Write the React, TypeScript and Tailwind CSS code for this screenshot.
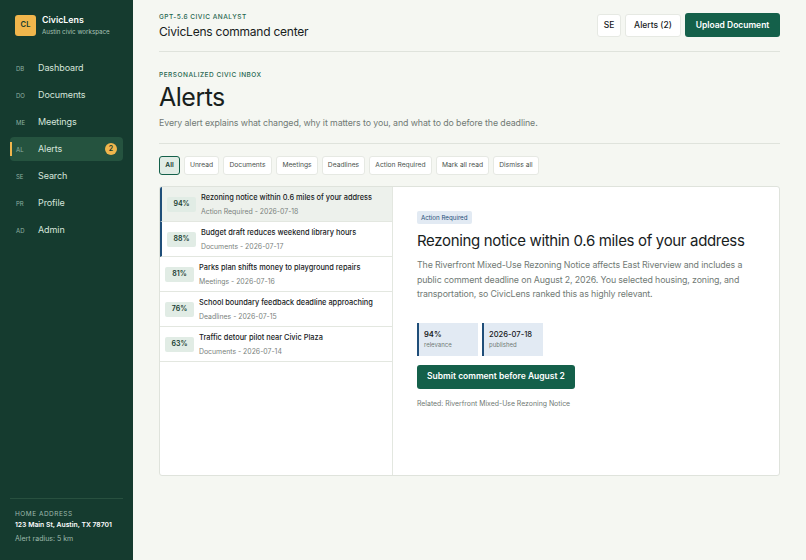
const navItems = [
  { code: "DB", label: "Dashboard" },
  { code: "DO", label: "Documents" },
  { code: "ME", label: "Meetings" },
  { code: "AL", label: "Alerts", active: true, badge: "2" },
  { code: "SE", label: "Search" },
  { code: "PR", label: "Profile" },
  { code: "AD", label: "Admin" },
];

const filters = [
  { label: "All", width: "w-[21px]" },
  { label: "Unread", width: "w-[35px]" },
  { label: "Documents", width: "w-[49px]" },
  { label: "Meetings", width: "w-[42px]" },
  { label: "Deadlines", width: "w-[43px]" },
  { label: "Action Required", width: "w-[63px]" },
  { label: "Mark all read", width: "w-[53px]" },
  { label: "Dismiss all", width: "w-[46px]" },
];

const alerts = [
  { score: "94%", title: "Rezoning notice within 0.6 miles of your address", meta: "Action Required - 2026-07-18", selected: true, unread: true },
  { score: "88%", title: "Budget draft reduces weekend library hours", meta: "Documents - 2026-07-17", unread: true },
  { score: "81%", title: "Parks plan shifts money to playground repairs", meta: "Meetings - 2026-07-16" },
  { score: "76%", title: "School boundary feedback deadline approaching", meta: "Deadlines - 2026-07-15" },
  { score: "63%", title: "Traffic detour pilot near Civic Plaza", meta: "Documents - 2026-07-14" },
];

const Sidebar = () => (
  <aside className="w-[133px] shrink-0 bg-[#153b2f] flex flex-col px-[10px] pt-[14px] pb-[15px]">
    <div className="flex items-center gap-[6px] px-[5px] h-[22px]">
      <div className="w-[21px] h-[21px] shrink-0 rounded-[3px] bg-[#f0b64c] text-[#153b2f] text-[7.5px] font-semibold flex items-center justify-center">
        CL
      </div>
      <div className="flex flex-col">
        <span className="text-white text-[8.8px] leading-[13px] font-semibold">CivicLens</span>
        <span className="text-[#a9c4b7] text-[6.2px] leading-[11px] whitespace-nowrap">Austin civic workspace</span>
      </div>
    </div>
    <nav className="mt-[20px] flex flex-col gap-[3px]">
      {navItems.map((item) => (
        <div
          key={item.code}
          className={`relative h-[24px] flex items-center rounded-[4px] pl-[6px] pr-[6px] ${item.active ? "bg-[#25533f]" : ""}`}
        >
          {item.active && <span className="absolute left-0 top-[5px] bottom-[5px] w-[2px] bg-[#f0b64c]" />}
          <span className="w-[22px] text-[6px] text-[#8fb0a1]">{item.code}</span>
          <span className="text-[9px] tracking-[-0.1px] text-[#d6e5dc]">{item.label}</span>
          {item.badge && (
            <span className="ml-auto w-[12px] h-[12px] rounded-full bg-[#f0b64c] text-[#153b2f] text-[7px] font-semibold flex items-center justify-center">
              {item.badge}
            </span>
          )}
        </div>
      ))}
    </nav>
    <div className="mt-auto border-t border-[#28503f] pt-[10px] px-[5px]">
      <div className="text-[6.5px] leading-[10px] tracking-[0.5px] text-[#9dbaac]">HOME ADDRESS</div>
      <div className="text-[6.8px] leading-[12px] font-semibold text-white whitespace-nowrap">123 Main St, Austin, TX 78701</div>
      <div className="text-[7px] leading-[12px] mt-[2px] text-[#9dbaac]">Alert radius: 5 km</div>
    </div>
  </aside>
);

const Header = () => (
  <header className="h-[52px] shrink-0 border-b border-[#dfe3dc] flex items-center justify-between">
    <div className="mt-[1px]">
      <div className="text-[6.5px] leading-[10px] tracking-[0.5px] font-medium text-[#1f6650]">GPT-5.6 CIVIC ANALYST</div>
      <div className="text-[12px] leading-[17px] tracking-[-0.22px] mt-[1px] text-[#18211d]">CivicLens command center</div>
    </div>
    <div className="flex items-center gap-[4px] -mt-[1px]">
      <button className="h-[23px] w-[24px] bg-white rounded-[3px] border border-[#e6e9e3] text-[8.5px] font-medium text-[#18211d]">SE</button>
      <button className="h-[23px] w-[56px] bg-white rounded-[3px] border border-[#e6e9e3] text-[8.5px] font-medium text-[#18211d]">Alerts (2)</button>
      <button className="h-[24px] w-[95px] bg-[#14604a] rounded-[3px] text-[8.5px] font-semibold text-white">Upload Document</button>
    </div>
  </header>
);

const AlertRow = ({ score, title, meta, selected, unread }: (typeof alerts)[number]) => (
  <div
    className={`h-[35px] shrink-0 flex items-center border-b border-[#e3e7e0] pl-[5px] ${selected ? "bg-[#edf1ec]" : ""} ${unread ? "border-l-2 border-l-[#1f4e79]" : ""}`}
  >
    <span className="w-[29px] h-[15px] shrink-0 rounded-[2px] bg-[#e1ece5] text-[#153b2f] text-[7px] font-semibold flex items-center justify-center">
      {score}
    </span>
    <div className="ml-[5px]">
      <div className="text-[7.4px] leading-[12px] font-medium text-[#18211d] whitespace-nowrap">{title}</div>
      <div className="text-[6.9px] leading-[11px] mt-[2px] text-[#7a827d] whitespace-nowrap">{meta}</div>
    </div>
  </div>
);

const DetailPanel = () => (
  <div className="flex-1 pt-[24px] pl-[24px] pr-[32px]">
    <span className="flex w-fit h-[13px] items-center rounded-[2px] bg-[#e2eaf3] px-[4px] text-[6.2px] text-[#1f4e79]">Action Required</span>
    <h2 className="text-[15px] leading-[22px] tracking-[-0.33px] mt-[6px] text-[#18211d] whitespace-nowrap">Rezoning notice within 0.6 miles of your address</h2>
    <p className="text-[8.8px] leading-[14.6px] tracking-[-0.12px] mt-[6px] text-[#717a75]">
      The Riverfront Mixed-Use Rezoning Notice affects East Riverview and includes a public comment deadline on August 2,
      2026. You selected housing, zoning, and transportation, so CivicLens ranked this as highly relevant.
    </p>
    <div className="flex gap-[4px] mt-[21px]">
      <div className="w-[61px] h-[33px] bg-[#e2eaf3] border-l-2 border-[#1f4e79] pl-[5px] pt-[6px]">
        <div className="text-[7.6px] leading-[11px] font-semibold text-[#18211d]">94%</div>
        <div className="text-[6px] leading-[10px] text-[#717a75]">relevance</div>
      </div>
      <div className="w-[61px] h-[33px] bg-[#e2eaf3] border-l-2 border-[#1f4e79] pl-[5px] pt-[6px]">
        <div className="text-[7.6px] leading-[11px] font-medium text-[#18211d]">2026-07-18</div>
        <div className="text-[6px] leading-[10px] text-[#717a75]">published</div>
      </div>
    </div>
    <button className="block mt-[9px] h-[24px] w-[158px] rounded-[3px] bg-[#14604a] text-white text-[8.5px] font-semibold">
      Submit comment before August 2
    </button>
    <div className="text-[6.9px] leading-[10px] mt-[10px] text-[#717a75]">Related: Riverfront Mixed-Use Rezoning Notice</div>
  </div>
);

export default function App() {
  return (
    <div className="w-[806px] h-[560px] overflow-hidden flex bg-[#f5f7f2] font-['Inter',sans-serif]">
      <Sidebar />
      <main className="flex-1 flex flex-col pl-[26px] pr-[26px]">
        <Header />
        <section className="pt-[18px]">
          <div className="text-[6.5px] leading-[10px] tracking-[0.5px] font-medium text-[#1f6650]">PERSONALIZED CIVIC INBOX</div>
          <h1 className="text-[25px] leading-[32px] tracking-[-0.5px] mt-[1px] text-[#18211d]">Alerts</h1>
          <p className="text-[8.8px] leading-[14px] tracking-[-0.09px] mt-[3px] text-[#717a75]">
            Every alert explains what changed, why it matters to you, and what to do before the deadline.
          </p>
        </section>
        <div className="border-t border-[#dfe3dc] mt-[13px] pt-[12px] flex gap-[4px]">
          {filters.map((f, i) => (
            <button
              key={f.label}
              className={`h-[19px] ${f.width} rounded-[3px] border text-[6.7px] ${i === 0 ? "bg-[#e1ece5] border-[#14604a] text-[#153b2f] font-semibold" : "bg-white border-[#e6e9e3] text-[#4a524e]"}`}
            >
              {f.label}
            </button>
          ))}
        </div>
        <div className="mt-[11px] h-[290px] flex bg-white border border-[#dfe3dc] rounded-[3px] overflow-hidden">
          <div className="w-[233px] shrink-0 border-r border-[#e3e7e0] flex flex-col">
            {alerts.map((a) => (
              <AlertRow key={a.score} {...a} />
            ))}
          </div>
          <DetailPanel />
        </div>
      </main>
    </div>
  );
}
